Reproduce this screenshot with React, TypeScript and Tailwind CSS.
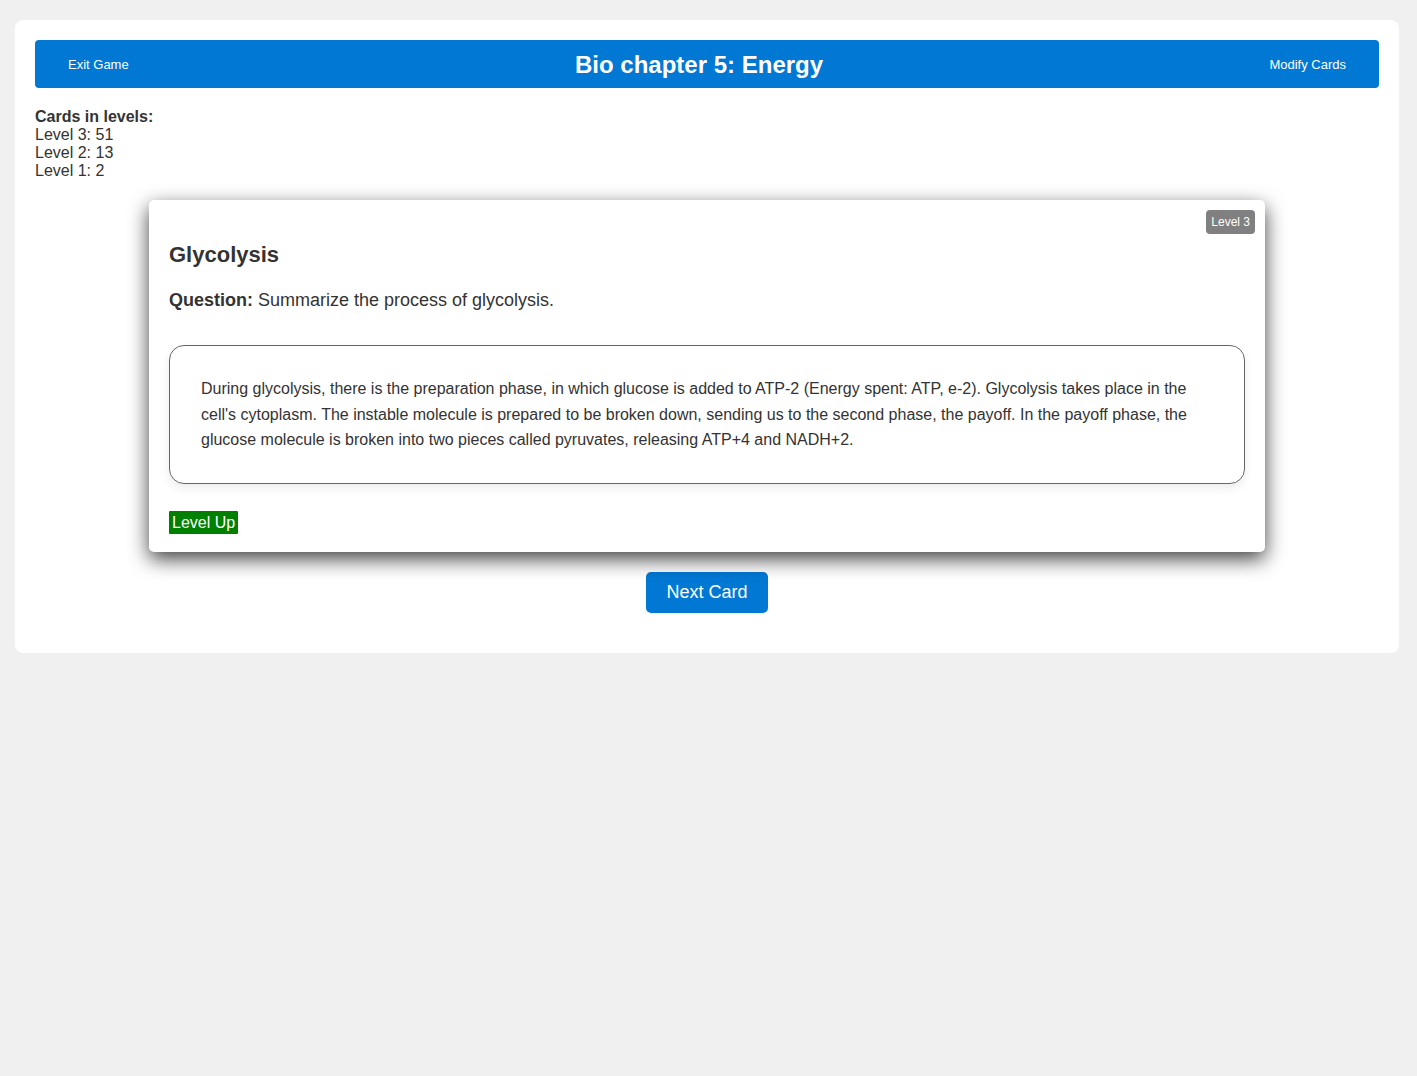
import React from 'react';

const levels = [
  { level: 3, count: 51 },
  { level: 2, count: 13 },
  { level: 1, count: 2 },
];

const App: React.FC = () => {
  return (
    <div className="min-h-[1076px] bg-[#f0f0f0] p-[20px_18px_0_15px] font-['Liberation_Sans',Arial,sans-serif] text-[#333]">
      <div className="bg-white rounded-[8px] p-5 w-[1384px]">
        {/* Header */}
        <div className="h-12 bg-[#0078d4] rounded-[4px] flex items-center justify-between px-[33px] pt-px text-white">
          <button className="text-[13px]">Exit Game</button>
          <h1 className="text-[24px] font-bold">Bio chapter 5: Energy</h1>
          <button className="text-[13px]">Modify Cards</button>
        </div>

        {/* Stats */}
        <div className="mt-5 text-[16px] leading-[18px]">
          <div className="font-bold">Cards in levels:</div>
          {levels.map((l) => (
            <div key={l.level}>
              Level {l.level}: {l.count}
            </div>
          ))}
        </div>

        {/* Card */}
        <div className="relative mx-auto mt-5 w-[1116px] bg-white rounded-[5px] px-5 pt-5 pb-[18px] shadow-[0_7px_20px_rgba(0,0,0,0.75)]">
          <span className="absolute top-[10px] right-[10px] bg-[#808080] text-white text-[12px] leading-[14px] px-[5px] py-[5px] rounded-[4px]">
            Level 3
          </span>
          <h3 className="mt-[22px] text-[22px] font-bold leading-[26px]">Glycolysis</h3>
          <p className="mt-[22px] text-[18px] leading-[21px]">
            <span className="font-bold">Question:</span> Summarize the process of glycolysis.
          </p>
          <div className="mt-[34px] border border-[#666] rounded-[15px] pt-[30px] pb-[30px] pl-[31px] pr-[40px] shadow-[0_4px_10px_rgba(0,0,0,0.08)]">
            <p className="text-[16px] leading-[25.5px]">
              During glycolysis, there is the preparation phase, in which glucose is added to ATP-2 (Energy spent: ATP, e-2). Glycolysis takes place in the cell's cytoplasm. The instable molecule is prepared to be broken down, sending us to the second phase, the payoff. In the payoff phase, the glucose molecule is broken into two pieces called pyruvates, releasing ATP+4 and NADH+2.
            </p>
          </div>
          <button className="mt-[27px] block bg-[#008000] text-white text-[16px] leading-[17px] px-[3px] py-[3px] rounded-[1px]">
            Level Up
          </button>
        </div>

        {/* Next */}
        <div className="flex justify-center mt-5 pb-5">
          <button className="bg-[#0078d4] text-white text-[18px] leading-[21px] px-5 py-[10px] rounded-[5px]">
            Next Card
          </button>
        </div>
      </div>
    </div>
  );
};

export default App;
